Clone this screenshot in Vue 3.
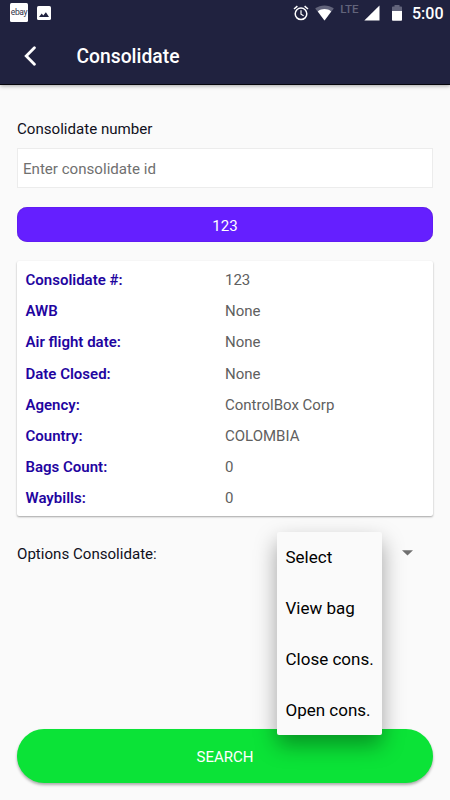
<script setup>
import { ref } from 'vue'

const consolidateId = ref('')
const details = [
  { label: 'Consolidate #:', value: '123' },
  { label: 'AWB', value: 'None' },
  { label: 'Air flight date:', value: 'None' },
  { label: 'Date Closed:', value: 'None' },
  { label: 'Agency:', value: 'ControlBox Corp' },
  { label: 'Country:', value: 'COLOMBIA' },
  { label: 'Bags Count:', value: '0' },
  { label: 'Waybills:', value: '0' },
]
const options = ['Select', 'View bag', 'Close cons.', 'Open cons.']
</script>

<template>
  <div class="screen">
    <header class="top">
      <div class="status">
        <div class="notifications">
          <span class="ebay">ebay</span>
          <svg class="photo" width="14" height="14" viewBox="0 0 14 14">
            <rect width="14" height="14" rx="1.6" fill="#fff" />
            <path d="M2 11 4.7 7.6 6.3 9.4 8.9 6.2 12 11Z" fill="#20223f" />
          </svg>
        </div>
        <div class="system">
          <svg class="alarm" width="16" height="16" viewBox="0 0 16 16" fill="none" stroke="#fff">
            <circle cx="8" cy="8.8" r="5.8" stroke-width="1.5" />
            <path d="M8 5.3v3.9l2.6 1.6" stroke-width="1.2" />
            <path d="M1 4 4.4 1.1M15 4l-3.4-2.9" stroke-width="1.5" />
          </svg>
          <svg class="wifi" width="19" height="16" viewBox="0 0 19 16">
            <path d="M.2 3.6C5.7-.7 13.3-.7 18.8 3.6L9.5 15.4Z" fill="#62647b" />
            <path d="M2.8 6.4C6.7 3.3 12.3 3.3 16.2 6.4L9.5 15.4Z" fill="#fff" />
          </svg>
          <span class="lte">LTE</span>
          <svg class="signal" width="16" height="16" viewBox="0 0 16 16">
            <path d="M15.5.5v15H.3Z" fill="#fff" />
          </svg>
          <svg class="battery" width="10" height="16" viewBox="0 0 10 16">
            <path d="M0 6V2.2Q0 1.5.8 1.5H2.5V0h5v1.5h1.7q.8 0 .8.7V6Z" fill="#62647b" />
            <path d="M0 6h10v8.8q0 .9-.8.9H.8q-.8 0-.8-.9Z" fill="#fff" />
          </svg>
          <span class="clock">5:00</span>
        </div>
      </div>
      <div class="appbar">
        <svg class="back" width="14" height="20" viewBox="0 0 14 20">
          <path d="M10.4 1.7 2.2 10l8.2 8.3" fill="none" stroke="#fff" stroke-width="2.8" stroke-linecap="round" />
        </svg>
        <h1>Consolidate</h1>
      </div>
    </header>

    <main class="content">
      <label class="caption" for="cid">Consolidate number</label>
      <input id="cid" v-model="consolidateId" class="field" placeholder="Enter consolidate id" />
      <button class="chip">123</button>

      <section class="card">
        <div v-for="row in details" :key="row.label" class="row">
          <span class="label">{{ row.label }}</span>
          <span class="value">{{ row.value }}</span>
        </div>
      </section>

      <div class="options">
        <span class="options-label">Options Consolidate:</span>
        <svg class="arrow" width="11" height="6" viewBox="0 0 11 6">
          <path d="M0 .2h11L5.5 5.6Z" fill="#707070" />
        </svg>
        <ul class="menu">
          <li v-for="option in options" :key="option">{{ option }}</li>
        </ul>
      </div>

      <button class="search">SEARCH</button>
    </main>
  </div>
</template>

<style>
body {
  margin: 0;
  background: #fafafa;
}
</style>

<style scoped>
.screen {
  box-sizing: border-box;
  display: flex;
  flex-direction: column;
  width: 450px;
  height: 800px;
  overflow: hidden;
  background: #fafafa;
  color: #10101c;
  font-family: Roboto, 'Liberation Sans', sans-serif;
  font-size: 15px;
}
.top {
  box-sizing: border-box;
  height: 85px;
  flex: none;
  background: #20223f;
  border-bottom: 1px solid #05050c;
  box-shadow: 0 1px 4px rgba(0, 0, 0, 0.35);
  color: #fff;
}
.status {
  display: flex;
  justify-content: space-between;
  height: 27px;
  padding: 0 8px 0 10px;
}
.notifications,
.system {
  display: flex;
  align-items: center;
}
.system {
  height: 26px;
}
.notifications {
  gap: 9px;
}
.ebay {
  width: 18px;
  height: 19px;
  margin-top: -2px;
  border-radius: 1.5px;
  background: #fff;
  color: #30324a;
  font-size: 8.5px;
  line-height: 18px;
  letter-spacing: -0.4px;
  text-align: center;
}
.photo {
  margin-top: -2px;
}
.wifi {
  margin-left: 6px;
}
.lte {
  margin: -8px 0 0 6px;
  color: #62647b;
  font-size: 11.5px;
  font-weight: 500;
}
.signal {
  margin-left: 5px;
}
.battery {
  margin-left: 12px;
}
.clock {
  width: 30px;
  margin-left: 10.5px;
  font-size: 16px;
  font-weight: 500;
  line-height: 29px;
}
.appbar {
  display: flex;
  align-items: center;
  height: 57px;
  padding-left: 24px;
}
h1 {
  margin: 1px 0 0 38.5px;
  font-size: 19.3px;
  font-weight: 500;
}
.content {
  display: flex;
  flex-direction: column;
  padding: 34px 17px 0;
}
.caption {
  height: 29px;
  font-size: 15.1px;
  line-height: 20px;
}
.field {
  box-sizing: border-box;
  height: 40px;
  padding: 1px 5px 0;
  border: 1px solid #ececec;
  border-radius: 0;
  background: #fff;
  font: inherit;
  font-size: 15.1px;
  outline: none;
}
.field::placeholder {
  color: #707070;
  opacity: 1;
}
.chip {
  height: 35px;
  margin-top: 19px;
  padding: 2px 0 0;
  border: 0;
  border-radius: 10px;
  background: #651fff;
  box-shadow: inset 0 0 1px #3a0a90;
  color: #fff;
  font: inherit;
}
.card {
  box-sizing: border-box;
  height: 255px;
  margin-top: 19px;
  padding: 4px 8.5px 0;
  border-radius: 2px;
  background: #fff;
  box-shadow: 0 1px 2px rgba(0, 0, 0, 0.34);
}
.row {
  display: grid;
  grid-template-columns: 199.5px 1fr;
  height: 31.2px;
  line-height: 31.2px;
}
.label {
  color: #1f05a0;
  font-weight: 600;
}
.value {
  color: #606060;
}
.options {
  position: relative;
  display: flex;
  align-items: center;
  justify-content: space-between;
  height: 74px;
  padding-right: 20px;
}
.options-label {
  padding-top: 1px;
  font-size: 15.1px;
}
.menu {
  position: absolute;
  top: 16px;
  left: 260px;
  box-sizing: border-box;
  width: 105px;
  height: 203px;
  margin: 0;
  padding: 0 0 0 8.5px;
  border-radius: 2px;
  background: #fafafa;
  box-shadow: 0 10px 22px rgba(0, 0, 0, 0.36);
  color: #000;
  font-size: 17px;
  line-height: 50.9px;
  list-style: none;
  white-space: nowrap;
}
.search {
  height: 54px;
  margin-top: 139.4px;
  padding: 1px 0 0;
  border: 0;
  border-radius: 27px;
  background: #0be337;
  box-shadow: 0 2px 3px rgba(0, 0, 0, 0.32);
  color: #fff;
  font: inherit;
}
</style>
